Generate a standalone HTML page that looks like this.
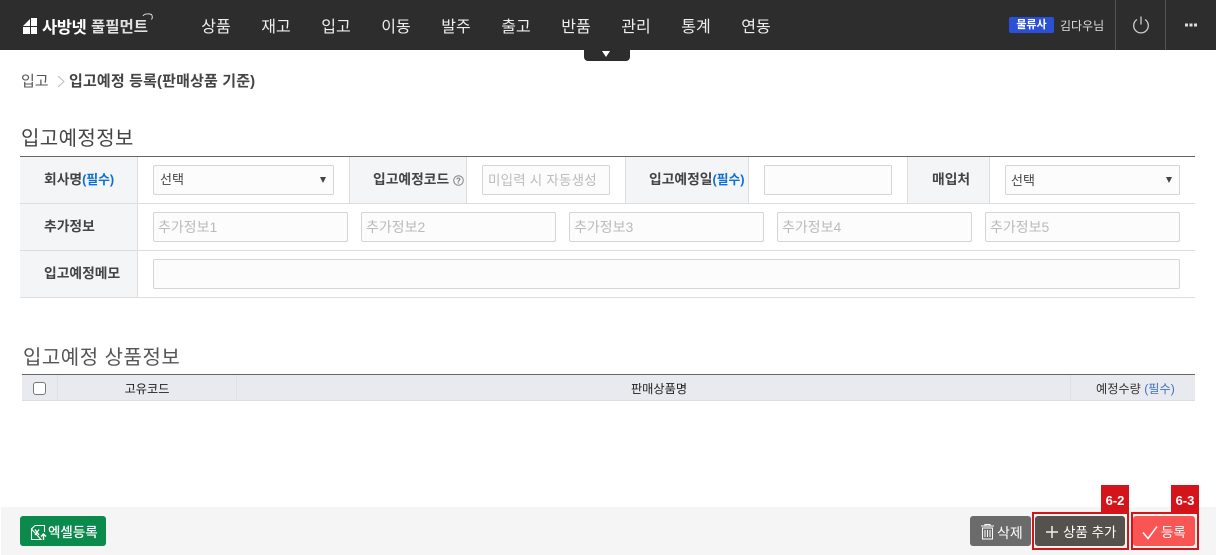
<!DOCTYPE html>
<html lang="ko"><head><meta charset="utf-8"><title>입고예정 등록</title>
<style>
*{box-sizing:border-box}
html,body{margin:0;padding:0;background:#fff}
body{width:1216px;height:555px;position:relative;overflow:hidden;font-family:"Liberation Sans","Noto Sans CJK KR",sans-serif;color:#333}
.a{position:absolute;white-space:nowrap}
.nav{top:16px;width:60px;text-align:center;color:#eee;font-size:16px;line-height:24px}
.th{background:#f4f5f7;border-right:1px solid #ddd;font-size:13.800px;font-weight:700;color:#444;text-align:left;padding-left:24px;line-height:45px;height:46px}
.box{position:absolute;background:#fcfcfc;border:1px solid #d5d5d5;border-radius:2px;font-size:14px;line-height:29px;padding-left:4px;color:#bbb;white-space:nowrap}
.sel{color:#444;padding-left:6px;font-size:13px;line-height:27px}
.sel i{position:absolute;right:7px;top:11px;border-left:3.500px solid transparent;border-right:3.500px solid transparent;border-top:6px solid #444}
.hl{position:absolute;height:1px;background:#ddd;left:20px;width:1175px}
.req{color:#0d6fd8;font-size:12.800px}
.btn{position:absolute;top:516px;height:30px;border-radius:3px;color:#fff;font-size:14px;line-height:30px}
.btn span{top:2px}
.lab{position:absolute;top:485px;width:28px;height:27px;background:#d3141a;color:#fff;font-size:13px;font-weight:700;text-align:center;line-height:31px}
.rb{position:absolute;top:512px;height:38px;border:2px solid #d3141a;background:#f4f4ec}
.tc{top:379px;font-size:12.200px;line-height:20px;color:#222}
</style></head><body>
<div class="a" style="left:0;top:0;width:1216px;height:50px;background:#2d2d2d"></div>
<svg class="a" style="left:22px;top:17px" width="17" height="18" viewBox="0 0 17 18"><path d="M1 9 8 2V9ZM9 1h6v8H9ZM1 10h7v7H1ZM9 10h6v7H9Z" fill="#fff"/></svg>
<div class="a" style="left:42px;top:15px;font-size:16.500px;font-weight:700;color:#fff;line-height:26px;letter-spacing:-.4px">사방넷</div>
<div class="a" style="left:91px;top:15px;font-size:15.500px;font-weight:700;color:#e0e0e0;line-height:26px;letter-spacing:0">풀필먼트</div>
<svg class="a" style="left:141px;top:12px" width="13" height="12" viewBox="0 0 13 12"><path d="M2 4C3 1.500 8 1.500 10.500 2.500 11.500 4 11.500 6 10.500 7.500" fill="none" stroke="#ddd"/></svg>
<div class="a nav" style="left:186px">상품</div><div class="a nav" style="left:246px">재고</div><div class="a nav" style="left:306px">입고</div><div class="a nav" style="left:366px">이동</div><div class="a nav" style="left:426px">발주</div><div class="a nav" style="left:486px">출고</div><div class="a nav" style="left:546px">반품</div><div class="a nav" style="left:606px">관리</div><div class="a nav" style="left:666px">통계</div><div class="a nav" style="left:726px">연동</div>
<div class="a" style="left:584px;top:50px;width:46px;height:11px;background:#2d2d2d;border-radius:0 0 4px 4px"></div>
<div class="a" style="left:602px;top:51px;border-left:4.500px solid transparent;border-right:4.500px solid transparent;border-top:6px solid #fff"></div>
<div class="a" style="left:1009px;top:17px;width:45px;height:16px;background:#2b50d8;border-radius:2px;color:#fff;font-size:11px;font-weight:700;line-height:17px;text-align:center">물류사</div>
<div class="a" style="left:1060px;top:16px;font-size:12px;line-height:20px;color:#ddd">김다우님</div>
<div class="a" style="left:1115px;top:0;width:1px;height:50px;background:#555"></div>
<div class="a" style="left:1165px;top:0;width:1px;height:50px;background:#555"></div>
<svg class="a" style="left:1131px;top:15px" width="20" height="20" viewBox="0 0 20 20"><path d="M6 4.500A7.300 7.300 0 1 0 14 4.500M10 1.500V9.500" fill="none" stroke="#ccc" stroke-width="1.300"/></svg>
<svg class="a" style="left:1184px;top:23px" width="14" height="4"><path d="M1 .5h3v3H1ZM5.500 .5h3v3h-3ZM10 .5h3v3h-3Z" fill="#ddd"/></svg>

<div class="a" style="left:21px;top:71px;font-size:15px;line-height:22px;color:#555">입고</div>
<svg class="a" style="left:57px;top:75px" width="9" height="13"><path d="M1 1 7 6.500 1 12" fill="none" stroke="#bbb"/></svg>
<div class="a" style="left:69px;top:71px;font-size:15px;line-height:22px;font-weight:700;color:#444;letter-spacing:.15px">입고예정 등록(판매상품 기준)</div>

<div class="a" style="left:21px;top:124px;font-size:20px;line-height:30px;color:#444;letter-spacing:.4px">입고예정정보</div>
<div class="a" style="left:20px;top:156px;width:1175px;height:1px;background:#666"></div>
<div class="a th" style="left:20px;top:157px;width:118px">회사명<span class="req">(필수)</span></div>
<div class="a th" style="left:20px;top:204px;width:118px">추가정보</div>
<div class="a th" style="left:20px;top:251px;width:118px">입고예정메모</div>
<div class="a th" style="left:349px;top:157px;width:118px;border-left:1px solid #ddd;padding-left:23px">입고예정코드<svg style="position:absolute;left:103px;top:18px" width="11" height="11" viewBox="0 0 11 11"><circle cx="5.500" cy="5.500" r="4.800" fill="none" stroke="#888"/><text x="5.500" y="8.500" font-size="8" text-anchor="middle" fill="#777" font-family="Liberation Sans">?</text></svg></div>
<div class="a th" style="left:625px;top:157px;width:124px;border-left:1px solid #ddd;padding-left:23px">입고예정일<span class="req">(필수)</span></div>
<div class="a th" style="left:907px;top:157px;width:83px;border-left:1px solid #ddd;padding-left:24px">매입처</div>
<div class="hl" style="top:203px"></div><div class="hl" style="top:250px"></div><div class="hl" style="top:297px"></div>

<div class="box sel" style="left:153px;top:165px;width:181px;height:30px">선택<i></i></div>
<div class="box" style="left:482px;top:165px;width:128px;height:30px;padding-left:5px;font-size:13.500px;letter-spacing:.2px">미입력 시 자동생성</div>
<div class="box" style="left:764px;top:165px;width:128px;height:30px"></div>
<div class="box sel" style="left:1005px;top:165px;width:175px;height:30px;padding-left:5px;line-height:29px">선택<i></i></div>
<div class="box" style="left:153px;top:212px;width:195px;height:30px">추가정보1</div>
<div class="box" style="left:361px;top:212px;width:195px;height:30px">추가정보2</div>
<div class="box" style="left:569px;top:212px;width:195px;height:30px">추가정보3</div>
<div class="box" style="left:777px;top:212px;width:195px;height:30px">추가정보4</div>
<div class="box" style="left:985px;top:212px;width:195px;height:30px">추가정보5</div>
<div class="box" style="left:153px;top:259px;width:1027px;height:30px"></div>

<div class="a" style="left:23px;top:343px;font-size:20px;line-height:30px;color:#555;letter-spacing:.5px">입고예정 상품정보</div>
<div class="a" style="left:22px;top:374px;width:1173px;height:27px;background:#e9eaef;border-top:1px solid #666;border-bottom:1px solid #ddd"></div>
<div class="a" style="left:57px;top:375px;width:1px;height:25px;background:#dfe0e4"></div>
<div class="a" style="left:236px;top:375px;width:1px;height:25px;background:#dfe0e4"></div>
<div class="a" style="left:1070px;top:375px;width:1px;height:25px;background:#dfe0e4"></div>
<div class="a" style="left:33px;top:382px;width:13px;height:13px;background:#fff;border:1px solid #777;border-radius:3px"></div>
<div class="a tc" style="left:58px;width:178px;text-align:center">고유코드</div>
<div class="a tc" style="left:237px;width:844px;text-align:center">판매상품명</div>
<div class="a tc" style="left:1096px;color:#333">예정수량 <span style="color:#3d72b8">(필수)</span></div>

<div class="a" style="left:1px;top:507px;width:1215px;height:48px;background:#f5f5f5"></div>
<div class="btn" style="left:20px;width:86px;background:#0a8a4b"><svg style="position:absolute;left:10px;top:8px" width="17" height="17" viewBox="0 0 17 17"><path d="M5 1.500H14.500V8M11 15.500H1.500V5Z M1.500 5 5 1.500" fill="none" stroke="#fff" stroke-width="1.100"/><path d="M5 5.500 9 11M9 5.500 5 11" stroke="#fff" stroke-width="1.300"/><path d="M13.500 16V10M11 12.500 13.500 10 16 12.500" fill="none" stroke="#fff" stroke-width="1.400"/></svg><span style="position:absolute;left:28px;font-size:13.500px;font-weight:500">엑셀등록</span></div>
<div class="btn" style="left:970px;width:61px;background:#6b6b6b"><svg style="position:absolute;left:10px;top:7px" width="15" height="17" viewBox="0 0 15 17"><path d="M1 3h13M5 3V1.500h5V3" fill="none" stroke="#fff"/><path d="M2.500 5h10v11h-10Z" fill="none" stroke="#fff"/><path d="M5 7v7M7.500 7v7M10 7v7" stroke="#fff"/></svg><span style="position:absolute;left:27px;font-size:14px">삭제</span></div>
<div class="rb" style="left:1032px;width:97px"></div>
<div class="rb" style="left:1131px;width:68px"></div>
<div class="lab" style="left:1101px">6-2</div>
<div class="lab" style="left:1171px">6-3</div>
<div class="btn" style="left:1035px;width:90px;background:#55524d"><svg style="position:absolute;left:10px;top:9px" width="14" height="14"><path d="M7 1V13M1 7H13" stroke="#eee" stroke-width="1.500"/></svg><span style="position:absolute;left:28px;font-size:13.500px">상품 추가</span></div>
<div class="btn" style="left:1133px;width:62px;background:#f95555"><svg style="position:absolute;left:9px;top:9px" width="16" height="15"><path d="M1 7.500 6 13.500 15 1.500" fill="none" stroke="#fff" stroke-width="1.500"/></svg><span style="position:absolute;left:28px;font-size:13.500px">등록</span></div>
</body></html>
